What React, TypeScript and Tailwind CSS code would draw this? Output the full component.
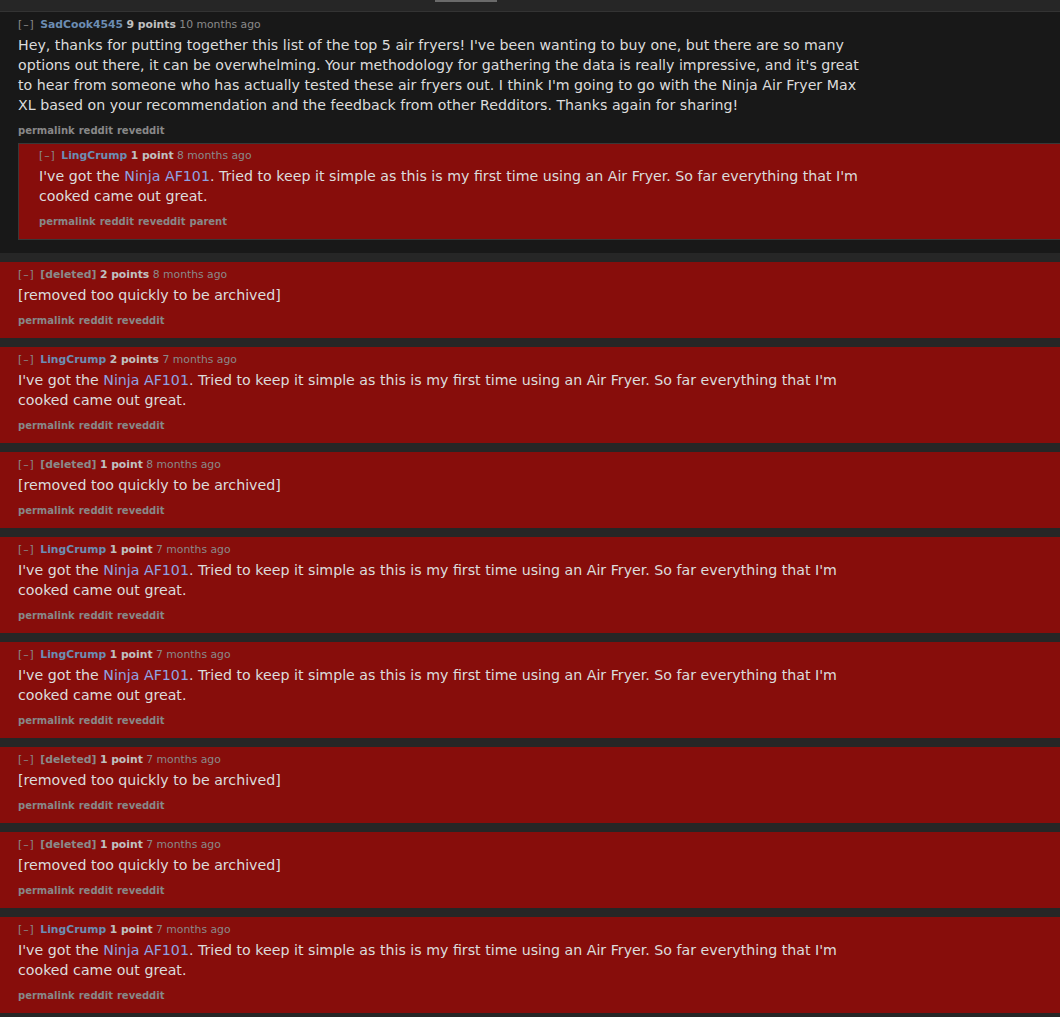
import React from 'react';

type Reply = {
  author: string;
  deleted?: boolean;
  points: string;
  age: string;
  body: 'ninja' | 'removed' | 'intro';
  parent?: boolean;
};

const font = { fontFamily: '"DejaVu Sans", Verdana, sans-serif' };

const Body = ({ kind }: { kind: Reply['body'] }) => {
  if (kind === 'removed') {
    return <p>[removed too quickly to be archived]</p>;
  }
  if (kind === 'ninja') {
    return (
      <p>
        I've got the <a className="text-[#90a2e2]">Ninja AF101</a>. Tried to keep it simple as this is my first time
        using an Air Fryer. So far everything that I'm cooked came out great.
      </p>
    );
  }
  return (
    <p>
      Hey, thanks for putting together this list of the top 5 air fryers! I've been wanting to buy one, but there are so
      many options out there, it can be overwhelming. Your methodology for gathering the data is really impressive, and
      it's great to hear from someone who has actually tested these air fryers out. I think I'm going to go with the
      Ninja Air Fryer Max XL based on your recommendation and the feedback from other Redditors. Thanks again for sharing!
    </p>
  );
};

const Tagline = ({ c }: { c: Reply }) => (
  <div className="text-[10.8px] leading-[14px] text-[#8a8a8a]">
    <span className="mr-[2px] tracking-[1px]">[–]</span>{' '}
    <span className={c.deleted ? 'font-bold text-[#8a8a8a]' : 'font-bold text-[#6c8db3]'}>{c.author}</span>{' '}
    <span className="font-bold text-[#c0c0c0]">{c.points}</span> <span>{c.age}</span>
  </div>
);

const Links = ({ parent }: { parent?: boolean }) => (
  <div className="mt-[9px] flex gap-[4px] text-[10px] font-bold leading-[14px] text-[#888]">
    <a>permalink</a>
    <a>reddit</a>
    <a>reveddit</a>
    {parent && <a>parent</a>}
  </div>
);

const Comment = ({ c, red, children }: { c: Reply; red?: boolean; children?: React.ReactNode }) => (
  <div className={red ? 'bg-[#870d0b] pt-[6px] pb-[10px] pl-[18px]' : 'bg-[#181818] pt-[6px] pb-[13px] pl-[18px]'}>
    <Tagline c={c} />
    <div className="mt-[3px] max-w-[852px] text-[14.2px] leading-[20px] text-[#dcdcdc]">
      <Body kind={c.body} />
    </div>
    <Links parent={c.parent} />
    {children}
  </div>
);

const comments: Reply[] = [
  { author: '[deleted]', deleted: true, points: '2 points', age: '8 months ago', body: 'removed' },
  { author: 'LingCrump', points: '2 points', age: '7 months ago', body: 'ninja' },
  { author: '[deleted]', deleted: true, points: '1 point', age: '8 months ago', body: 'removed' },
  { author: 'LingCrump', points: '1 point', age: '7 months ago', body: 'ninja' },
  { author: 'LingCrump', points: '1 point', age: '7 months ago', body: 'ninja' },
  { author: '[deleted]', deleted: true, points: '1 point', age: '7 months ago', body: 'removed' },
  { author: '[deleted]', deleted: true, points: '1 point', age: '7 months ago', body: 'removed' },
  { author: 'LingCrump', points: '1 point', age: '7 months ago', body: 'ninja' },
];

export default function App() {
  return (
    <div className="min-h-[1017px] bg-[#262626]" style={font}>
      <div className="relative h-[12px] border-b border-[#333]">
        <div className="absolute left-[435px] top-0 h-[2px] w-[62px] bg-[#6a6a6a]" />
      </div>
      <div className="flex flex-col gap-[9px] pb-[9px]">
        <Comment c={{ author: 'SadCook4545', points: '9 points', age: '10 months ago', body: 'intro' }}>
          <div className="mt-[5px] border border-r-0 border-[#383838] bg-[#870d0b] pt-[5px] pb-[10px] pl-[20px]">
            <Tagline c={{ author: 'LingCrump', points: '1 point', age: '8 months ago', body: 'ninja' }} />
            <div className="mt-[3px] max-w-[852px] text-[14.2px] leading-[20px] text-[#dcdcdc]">
              <Body kind="ninja" />
            </div>
            <Links parent />
          </div>
        </Comment>
        {comments.map((c, i) => (
          <Comment key={i} c={c} red />
        ))}
      </div>
    </div>
  );
}
